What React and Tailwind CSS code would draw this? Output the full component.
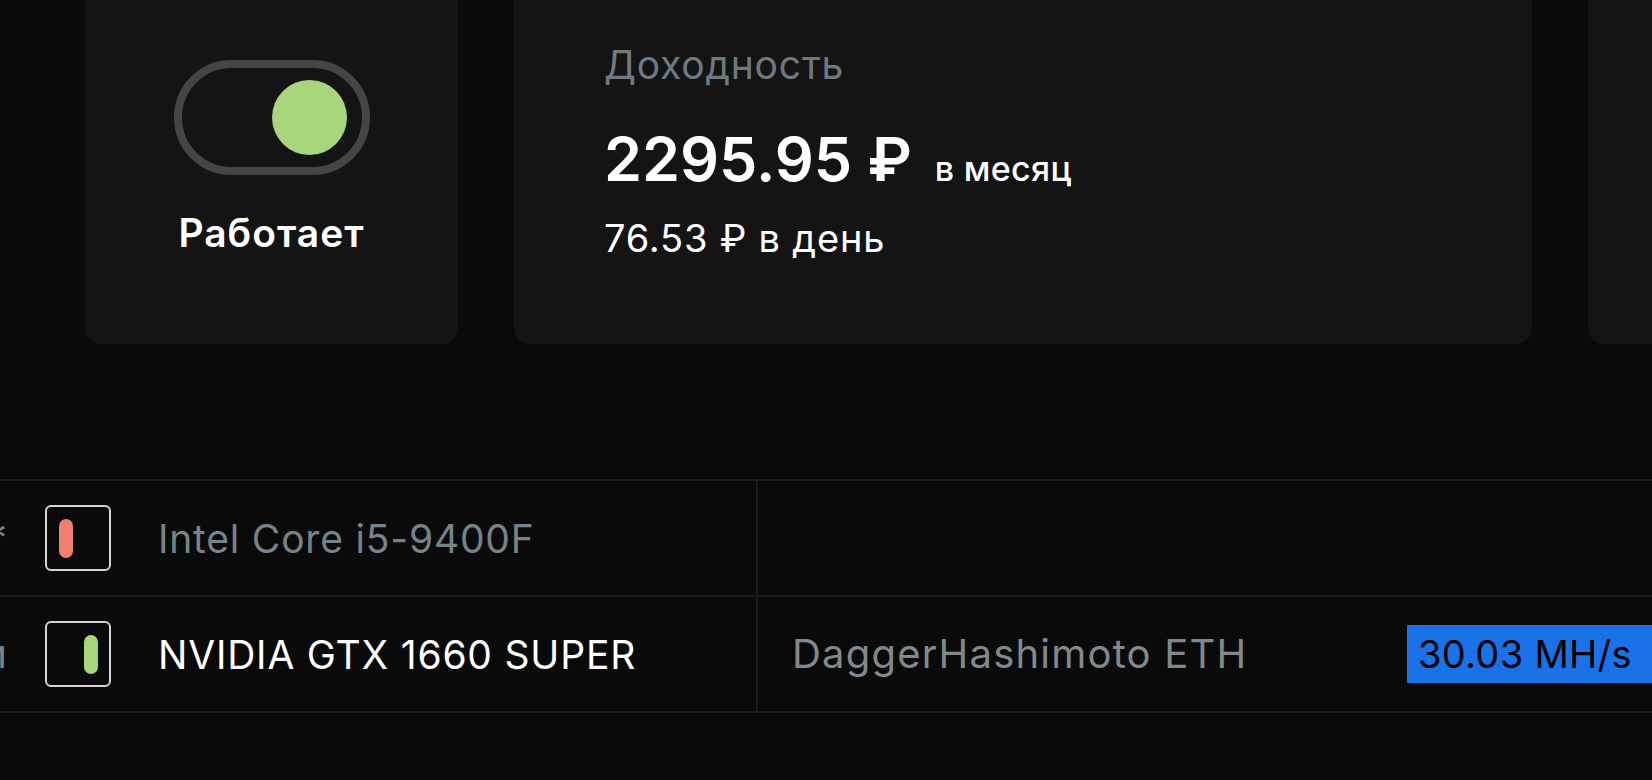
import React from 'react';

function Toggle() {
  return (
    <div className="w-[196px] h-[115px] rounded-full border-[8px] border-[#454545] flex items-center justify-end pr-[15px]">
      <div className="w-[75px] h-[75px] rounded-full bg-[#a8d67a]" />
    </div>
  );
}

function DeviceRow({ tail, on, name, dim, algo, rate }) {
  return (
    <div className="flex h-[116px] border-b-2 border-[#1c1c1c]">
      <div className="w-[756px] shrink-0 flex items-center">
        <div className="w-[7px] overflow-hidden flex justify-end whitespace-nowrap text-[40px] leading-none text-[#76848a]">
          {tail}
        </div>
        <div
          className={`ml-[38px] w-[66px] h-[66px] rounded-md border-2 border-[#d4d4d4] flex items-center ${
            on ? 'justify-end pr-[11px]' : 'justify-start pl-[12px]'
          }`}
        >
          <div className={`w-[14px] h-[39px] rounded-full ${on ? 'bg-[#a8d67a]' : 'bg-[#f08070]'}`} />
        </div>
        <div
          className={`ml-[47px] text-[39px] leading-none tracking-[0.8px] whitespace-nowrap ${
            dim ? 'text-[#76848a]' : 'text-white'
          }`}
        >
          {name}
        </div>
      </div>
      <div className="flex-1 min-w-0 overflow-hidden border-l-2 border-[#1c1c1c] flex items-center">
        {algo && (
          <>
            <div className="w-[649px] shrink-0 pl-[34px] text-[40px] leading-none tracking-[1.2px] text-[#808a8c] whitespace-nowrap">
              {algo}
            </div>
            <div className="shrink-0 h-[58px] pl-[11px] pr-[60px] bg-[#1b72e8] flex items-center text-[38px] leading-none tracking-[0.3px] text-black whitespace-nowrap">
              {rate}
            </div>
          </>
        )}
      </div>
    </div>
  );
}

export default function App() {
  return (
    <div className="relative w-[1652px] h-[780px] overflow-hidden bg-[#0a0a0a] font-['Inter',sans-serif]">
      <div className="flex gap-[56px] pl-[85px] mt-[-20px] h-[364px]">
        <div className="w-[373px] shrink-0 rounded-2xl bg-[#141414] flex flex-col items-center pt-[80px]">
          <Toggle />
          <div className="mt-[38px] text-[39px] leading-none font-semibold tracking-[1px] text-white">Работает</div>
        </div>
        <div className="w-[1018px] shrink-0 rounded-2xl bg-[#141414] pl-[90px] pt-[65px]">
          <div className="text-[39px] leading-none tracking-[0.8px] text-[#6e7a80]">Доходность</div>
          <div className="mt-[45px] flex items-baseline">
            <span className="text-[61px] leading-none font-semibold text-white">2295.95 ₽</span>
            <span className="ml-[23px] text-[34px] leading-none font-medium tracking-[0.3px] text-white">в месяц</span>
          </div>
          <div className="mt-[29px] text-[38px] leading-none tracking-[0.8px] text-white">76.53 ₽ в день</div>
        </div>
        <div className="w-[300px] shrink-0 rounded-2xl bg-[#141414]" />
      </div>
      <div className="mt-[135px] border-t-2 border-[#1c1c1c]">
        <DeviceRow tail="*" on={false} name="Intel Core i5-9400F" dim />
        <DeviceRow tail="и" on name="NVIDIA GTX 1660 SUPER" algo="DaggerHashimoto ETH" rate="30.03 MH/s" />
      </div>
    </div>
  );
}
